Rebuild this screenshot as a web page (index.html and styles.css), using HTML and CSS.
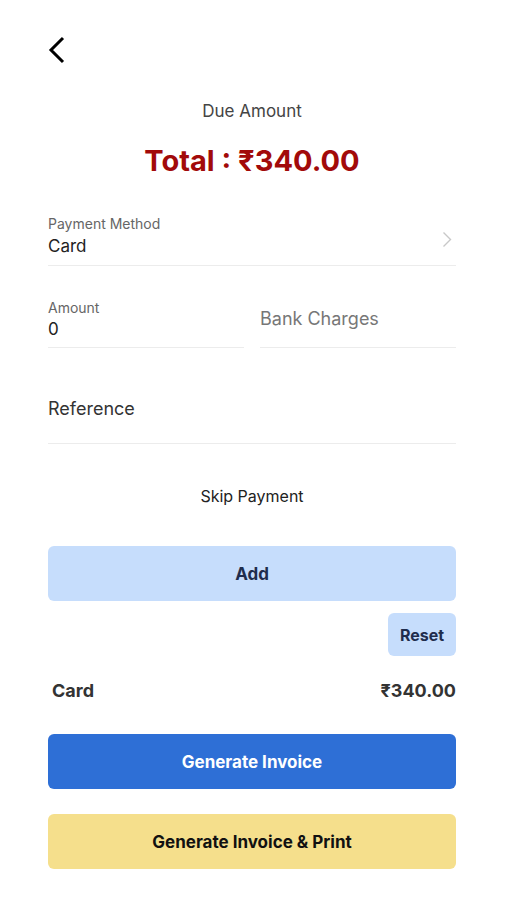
FILE: index.html
```html
<!DOCTYPE html>
<html lang="en">
<head>
    <meta charset="UTF-8">
    <meta name="viewport" content="width=device-width, initial-scale=1.0">
    <title>Payment</title>
    <link rel="stylesheet" href="styles.css">
</head>
<body>
    <div class="screen">
        <div class="topbar">
            <svg class="back" width="18" height="30" viewBox="0 0 18 30">
                <path d="M15 3 L3 15 L15 27" fill="none" stroke="#000" stroke-width="3"/>
            </svg>
        </div>

        <div class="due-label">Due Amount</div>
        <div class="total">Total : ₹340.00</div>

        <div class="field method">
            <div class="field-text">
                <div class="small-label">Payment Method</div>
                <div class="value">Card</div>
            </div>
            <svg class="chevron" width="10" height="17" viewBox="0 0 10 17">
                <path d="M1.5 1.5 L8.5 8.5 L1.5 15.5" fill="none" stroke="#c8c8c8" stroke-width="1.4"/>
            </svg>
        </div>

        <div class="row-2">
            <div class="field half">
                <div class="small-label">Amount</div>
                <div class="value">0</div>
            </div>
            <div class="field half">
                <div class="placeholder">Bank Charges</div>
            </div>
        </div>

        <div class="field reference">
            <div class="value big">Reference</div>
        </div>

        <div class="skip">Skip Payment</div>

        <button class="btn btn-add">Add</button>

        <div class="reset-row">
            <button class="btn btn-reset">Reset</button>
        </div>

        <div class="summary">
            <span>Card</span>
            <span>₹340.00</span>
        </div>

        <button class="btn btn-invoice">Generate Invoice</button>
        <button class="btn btn-print">Generate Invoice &amp; Print</button>
    </div>
</body>
</html>
```

FILE: styles.css
```css
* {
    box-sizing: border-box;
    margin: 0;
    padding: 0;
    font-family: 'Inter', 'Noto Sans', sans-serif;
}

body {
    background: #fff;
    width: 507px;
    min-height: 900px;
}

.screen {
    display: flex;
    flex-direction: column;
    padding: 0 51px 0 48px;
}

.topbar {
    height: 100px;
    padding-top: 35px;
}

.back {
    display: block;
}

.due-label {
    text-align: center;
    font-size: 17px;
    color: #444;
    line-height: 22px;
}

.total {
    text-align: center;
    font-size: 29px;
    font-weight: 700;
    color: #a20a0a;
    margin-top: 22px;
    line-height: 34px;
}

.field {
    border-bottom: 1px solid #ececec;
}

.method {
    margin-top: 36px;
    display: flex;
    align-items: center;
    justify-content: space-between;
    padding-bottom: 8px;
}

.chevron {
    margin-right: 4px;
    margin-top: 8px;
}

.small-label {
    font-size: 14px;
    color: #666;
    line-height: 20px;
}

.method .value {
    margin-top: 1px;
}

.value {
    font-size: 17px;
    color: #222;
    line-height: 22px;
}

.row-2 {
    display: flex;
    gap: 16px;
    margin-top: 32px;
}

.half {
    flex: 1;
    height: 50px;
}

.half .placeholder {
    font-size: 18px;
    color: #777;
    line-height: 22px;
    padding-top: 10px;
}

.reference {
    margin-top: 46px;
    height: 50px;
}

.value.big {
    font-size: 18px;
    color: #333;
    padding-top: 4px;
}

.skip {
    text-align: center;
    font-size: 16px;
    color: #222;
    margin-top: 42px;
    line-height: 20px;
}

.btn {
    border: none;
    border-radius: 6px;
    font-size: 17px;
    font-weight: 700;
    width: 100%;
    height: 55px;
}

.btn-add {
    background: #c6ddfc;
    color: #1f2d4d;
    margin-top: 40px;
}

.reset-row {
    display: flex;
    justify-content: flex-end;
    margin-top: 12px;
}

.btn-reset {
    width: 68px;
    height: 43px;
    background: #c6ddfc;
    color: #1f2d4d;
    font-size: 16px;
}

.summary {
    display: flex;
    justify-content: space-between;
    padding-left: 4px;
    margin-top: 24px;
    font-size: 18px;
    font-weight: 700;
    color: #333;
    line-height: 22px;
}

.btn-invoice {
    background: #2e6fd6;
    color: #fff;
    margin-top: 32px;
}

.btn-print {
    background: #f5df8c;
    color: #111;
    margin-top: 25px;
}
```
